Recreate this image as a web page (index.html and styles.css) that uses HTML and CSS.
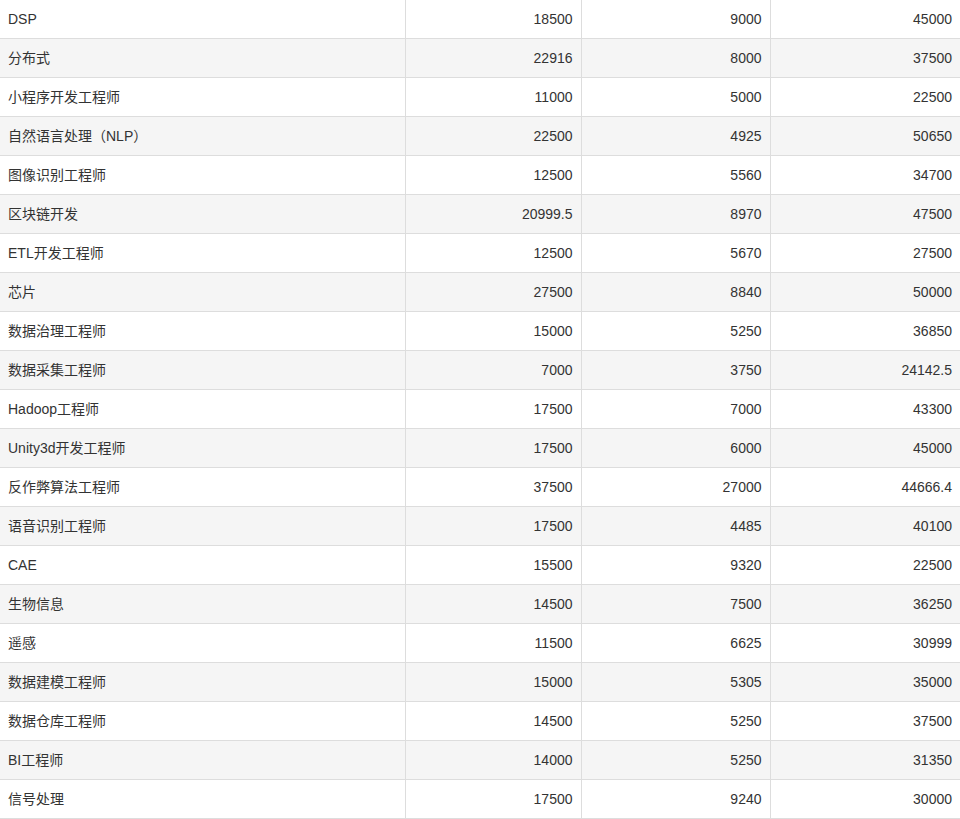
FILE: index.html
```html
<!DOCTYPE html>
<html>
<head>
  <title>薪资统计</title>
  <link rel="stylesheet" href="styles.css">
</head>
<body>
  <table class="salary-table">
    <colgroup>
      <col class="col-name">
      <col class="col-avg">
      <col class="col-min">
      <col class="col-max">
    </colgroup>
    <tbody>
      <tr><td>DSP</td><td>18500</td><td>9000</td><td>45000</td></tr>
      <tr><td>分布式</td><td>22916</td><td>8000</td><td>37500</td></tr>
      <tr><td>小程序开发工程师</td><td>11000</td><td>5000</td><td>22500</td></tr>
      <tr><td>自然语言处理（NLP）</td><td>22500</td><td>4925</td><td>50650</td></tr>
      <tr><td>图像识别工程师</td><td>12500</td><td>5560</td><td>34700</td></tr>
      <tr><td>区块链开发</td><td>20999.5</td><td>8970</td><td>47500</td></tr>
      <tr><td>ETL开发工程师</td><td>12500</td><td>5670</td><td>27500</td></tr>
      <tr><td>芯片</td><td>27500</td><td>8840</td><td>50000</td></tr>
      <tr><td>数据治理工程师</td><td>15000</td><td>5250</td><td>36850</td></tr>
      <tr><td>数据采集工程师</td><td>7000</td><td>3750</td><td>24142.5</td></tr>
      <tr><td>Hadoop工程师</td><td>17500</td><td>7000</td><td>43300</td></tr>
      <tr><td>Unity3d开发工程师</td><td>17500</td><td>6000</td><td>45000</td></tr>
      <tr><td>反作弊算法工程师</td><td>37500</td><td>27000</td><td>44666.4</td></tr>
      <tr><td>语音识别工程师</td><td>17500</td><td>4485</td><td>40100</td></tr>
      <tr><td>CAE</td><td>15500</td><td>9320</td><td>22500</td></tr>
      <tr><td>生物信息</td><td>14500</td><td>7500</td><td>36250</td></tr>
      <tr><td>遥感</td><td>11500</td><td>6625</td><td>30999</td></tr>
      <tr><td>数据建模工程师</td><td>15000</td><td>5305</td><td>35000</td></tr>
      <tr><td>数据仓库工程师</td><td>14500</td><td>5250</td><td>37500</td></tr>
      <tr><td>BI工程师</td><td>14000</td><td>5250</td><td>31350</td></tr>
      <tr><td>信号处理</td><td>17500</td><td>9240</td><td>30000</td></tr>
    </tbody>
  </table>
</body>
</html>
```

FILE: styles.css
```css
body {
  margin: 0;
  background-color: #fff;
  font-family: "Liberation Sans", Arial, "Noto Sans CJK SC", sans-serif;
  font-size: 14px;
  color: #333;
}

.salary-table {
  width: 960px;
  border-collapse: collapse;
  table-layout: fixed;
}

.col-name { width: 405px; }
.col-avg { width: 176px; }
.col-min { width: 189px; }
.col-max { width: 190px; }

.salary-table td {
  height: 38px;
  padding: 0 8px;
  border-bottom: 1px solid #ddd;
  vertical-align: middle;
  line-height: 20px;
  text-align: right;
  white-space: nowrap;
}

.salary-table td:first-child {
  text-align: left;
}

.salary-table td + td {
  border-left: 1px solid #ddd;
}

.salary-table tr:nth-child(even) td {
  background-color: #f5f5f5;
}
```
